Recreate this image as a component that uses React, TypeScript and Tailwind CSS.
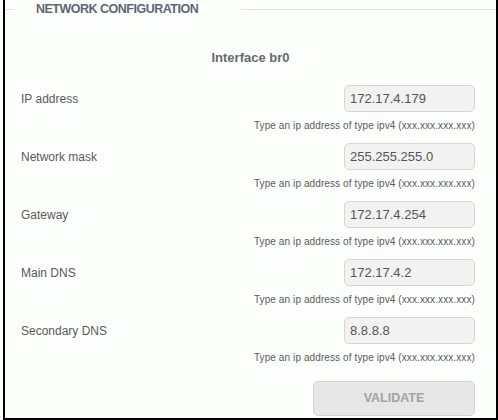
import { useState } from "react";

const FIELDS = [
  { key: "ip", label: "IP address", value: "172.17.4.179" },
  { key: "mask", label: "Network mask", value: "255.255.255.0" },
  { key: "gateway", label: "Gateway", value: "172.17.4.254" },
  { key: "dns1", label: "Main DNS", value: "172.17.4.2" },
  { key: "dns2", label: "Secondary DNS", value: "8.8.8.8" },
];

const HINT = "Type an ip address of type ipv4 (xxx.xxx.xxx.xxx)";

export default function App() {
  const [values, setValues] = useState<Record<string, string>>(
    Object.fromEntries(FIELDS.map((f) => [f.key, f.value]))
  );

  return (
    <div
      className="w-[498px] h-[420px] bg-[#fcfefc] pl-[3px]"
      style={{ fontFamily: '"Liberation Sans", Arial, sans-serif' }}
    >
      <div className="h-full border-l-2 border-r-2 border-b-2 border-black flex flex-col">
        {/* legend */}
        <div className="flex h-[18px]">
          <div className="w-[9px] h-px mt-[9px] bg-[#e2e2e2]" />
          <div className="pl-[22px] pr-[43px] text-[12.5px] leading-[18px] font-bold tracking-[-0.5px] text-[#5f6673]">
            NETWORK CONFIGURATION
          </div>
          <div className="flex-1 h-px mt-[9px] bg-[#e2e2e2]" />
        </div>

        <div className="mt-[32px] text-center text-[13px] leading-[16px] font-bold text-[#666a70]">
          Interface br0
        </div>

        <div className="mt-[19px] pl-[16px] pr-[21px] flex flex-col">
          {FIELDS.map((f) => (
            <div key={f.key} className="flex flex-col mb-[11px] last:mb-0">
              <div className="flex items-center justify-between">
                <label className="text-[12px] text-[#5a5a5a]">{f.label}</label>
                <input
                  value={values[f.key]}
                  onChange={(e) => setValues({ ...values, [f.key]: e.target.value })}
                  className="w-[131px] h-[27px] rounded-[5px] border border-[#d6d6d6] bg-[#f1f2f1] px-[5px] text-[13px] text-[#555] outline-none"
                />
              </div>
              <div className="mt-[8px] text-right text-[10px] leading-[12px] tracking-[0.1px] text-[#5a5a5a]">
                {HINT}
              </div>
            </div>
          ))}
          <div className="flex justify-end mt-[6px]">
            <button
              type="button"
              disabled
              className="w-[162px] h-[35px] rounded-[5px] border border-[#d4d4d4] bg-[#e6e7e6] text-[12.5px] font-bold text-[#a3a3a3]"
            >
              VALIDATE
            </button>
          </div>
        </div>
      </div>
    </div>
  );
}
